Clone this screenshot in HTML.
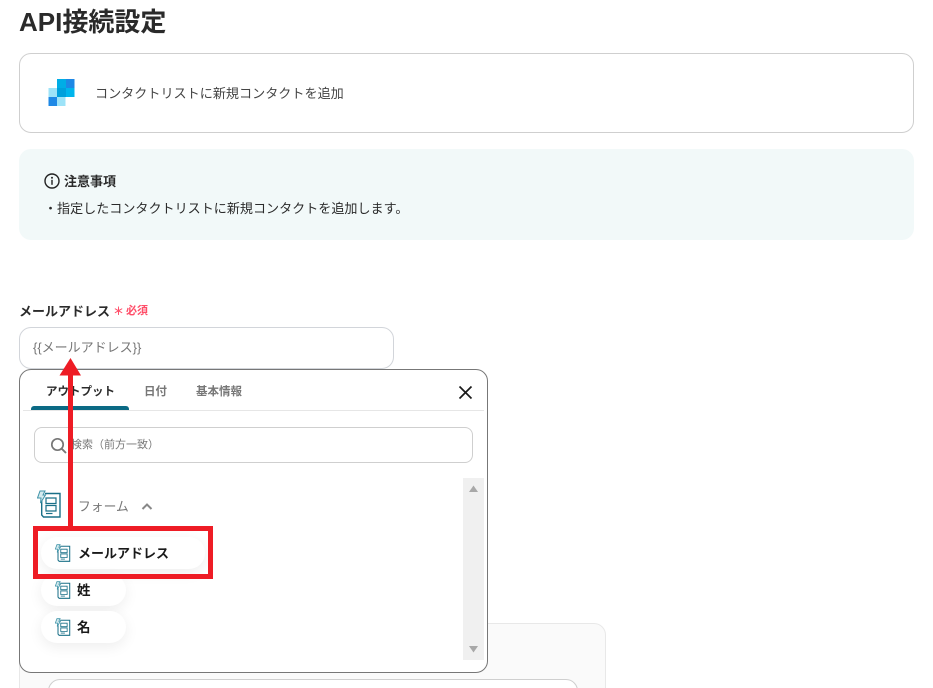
<!DOCTYPE html>
<html lang="ja">
<head>
<meta charset="utf-8">
<style>
html,body{margin:0;padding:0;background:#fff;}
#p{position:relative;width:933px;height:688px;overflow:hidden;background:#fff;font-family:"Liberation Sans","Noto Sans CJK JP",sans-serif;color:#2b2b2b;}
.a{position:absolute;box-sizing:border-box;}
.t{position:absolute;white-space:nowrap;line-height:1;}
.pill{position:absolute;left:41px;height:32px;background:#fff;border-radius:16px;box-shadow:0 4px 14px rgba(0,0,0,.07);}
</style>
</head>
<body>
<div id="p">
  <div class="t" style="left:19px;top:9px;font-size:26px;font-weight:700;color:#2a2a2a;">API接続設定</div>

  <div class="a" style="left:19px;top:53px;width:895px;height:80px;border:1px solid #cfcfcf;border-radius:12px;"></div>
  <svg class="a" style="left:48px;top:79px;" width="27" height="28" viewBox="0 0 27 28">
    <rect x="9" y="0" width="9" height="9" fill="#00ade6"/>
    <rect x="18" y="0" width="8.500" height="9" fill="#1e88e5"/>
    <rect x="0.500" y="9" width="8.500" height="9" fill="#9de3f8"/>
    <rect x="9" y="9" width="9" height="9" fill="#00a0dc"/>
    <rect x="18" y="9" width="8.500" height="9" fill="#00b5ec"/>
    <rect x="0.500" y="18" width="8.500" height="9" fill="#1e88e5"/>
    <rect x="9" y="18" width="8.500" height="9" fill="#9de3f8"/>
  </svg>
  <div class="t" style="left:95px;top:87px;font-size:13.100px;color:#444;">コンタクトリストに新規コンタクトを追加</div>

  <div class="a" style="left:19px;top:149px;width:895px;height:91px;background:#f2f9f9;border-radius:12px;"></div>
  <svg class="a" style="left:44px;top:173px;" width="16" height="16" viewBox="0 0 16 16">
    <circle cx="8" cy="8" r="7" fill="none" stroke="#222" stroke-width="1.400"/>
    <circle cx="8" cy="4.800" r="1" fill="#222"/>
    <rect x="7.300" y="6.800" width="1.400" height="5" fill="#222"/>
  </svg>
  <div class="t" style="left:64px;top:175px;font-size:13px;font-weight:700;color:#2b2b2b;">注意事項</div>
  <div class="t" style="left:44px;top:202px;font-size:13.070px;color:#2b2b2b;">・指定したコンタクトリストに新規コンタクトを追加します。</div>

  <div class="t" style="left:19px;top:305px;font-size:13px;font-weight:700;color:#2b2b2b;">メールアドレス</div>
  <div class="t" style="left:113px;top:307px;font-size:11px;font-weight:700;color:#ff4d68;">＊</div>
  <div class="t" style="left:126px;top:306px;font-size:11px;font-weight:700;color:#ff4d68;">必須</div>

  <div class="a" style="left:19px;top:327px;width:375px;height:42px;border:1px solid #d2d5da;border-radius:12px;"></div>
  <div class="t" style="left:33px;top:341px;font-size:13px;color:#777;">{{メールアドレス}}</div>

  <!-- background panel -->
  <div class="a" style="left:19px;top:623px;width:587px;height:80px;background:#fafafa;border:1px solid #e8e8e8;border-radius:12px;"></div>
  <div class="a" style="left:48px;top:679px;width:530px;height:40px;background:#fff;border:1px solid #cfcfcf;border-radius:12px;"></div>

  <!-- popup -->
  <div class="a" style="left:19px;top:369px;width:469px;height:304px;background:#fff;border:1px solid #777;border-radius:12px;"></div>
  <div class="t" style="left:46px;top:387px;font-size:11.500px;font-weight:700;color:#2b2b2b;">アウトプット</div>
  <div class="t" style="left:144px;top:387px;font-size:11.500px;font-weight:700;color:#777;">日付</div>
  <div class="t" style="left:196px;top:387px;font-size:11.500px;font-weight:700;color:#777;">基本情報</div>
  <div class="a" style="left:23px;top:410px;width:461px;height:1px;background:#e6e6e6;"></div>
  <div class="a" style="left:31px;top:406px;width:98px;height:4px;background:#0b6a85;border-radius:3px 3px 0 0;"></div>
  <svg class="a" style="left:458px;top:385px;" width="15" height="15" viewBox="0 0 15 15">
    <path d="M1.500 1.500L13.500 13.500M13.500 1.500L1.500 13.500" stroke="#1a1a1a" stroke-width="1.700" fill="none"/>
  </svg>

  <div class="a" style="left:34px;top:427px;width:439px;height:36px;border:1px solid #cfcfcf;border-radius:8px;"></div>
  <svg class="a" style="left:50px;top:437px;" width="18" height="18" viewBox="0 0 18 18">
    <circle cx="7.500" cy="7.500" r="5.700" fill="none" stroke="#777" stroke-width="1.700"/>
    <path d="M11.800 11.800L16 16" stroke="#777" stroke-width="1.900" fill="none"/>
  </svg>
  <div class="t" style="left:71px;top:440px;font-size:11px;color:#777;">検索（前方一致）</div>

  <!-- scrollbar -->
  <div class="a" style="left:463px;top:478px;width:21px;height:182px;background:#f0f0f0;"></div>
  <svg class="a" style="left:463px;top:478px;" width="21" height="182" viewBox="0 0 21 182">
    <path d="M10.500 7.500L15 14H6z" fill="#a8a8a8"/>
    <path d="M6 168H15L10.500 174.500z" fill="#a8a8a8"/>
  </svg>

  <!-- form group -->
  <svg class="a" style="left:37px;top:490px;" width="25" height="28" viewBox="0 0 25 28" fill="none">
    <path d="M8 3.500H23V27H6.500L4.700 25V11" stroke="#1a7088" stroke-width="1.400"/>
    <path d="M3 1H8L6 5H8.500L3.500 13L4 8H0.500z" stroke="#3f93a8" stroke-width="1" fill="#d5ebef"/>
    <path d="M9 8H19V13.500H9zM9 15.500H19V21H9z" stroke="#1a7088" stroke-width="1.200"/>
    <path d="M9 23.500H15.500" stroke="#1a7088" stroke-width="1.200"/>
  </svg>
  <div class="t" style="left:78px;top:501px;font-size:12.800px;color:#777;">フォーム</div>
  <svg class="a" style="left:141px;top:502px;" width="12" height="9" viewBox="0 0 12 9">
    <path d="M1.500 7L6 2.500L10.500 7" stroke="#888" stroke-width="2" fill="none"/>
  </svg>

  <div class="pill" style="top:537px;width:164px;"></div>
  <div class="pill" style="top:574px;width:85px;"></div>
  <div class="pill" style="top:611px;width:85px;"></div>

  <svg class="a" style="left:55px;top:544px;" width="16" height="18" viewBox="0 0 25 28" fill="none">
    <path d="M8 3.500H23V27H6.500L4.700 25V11" stroke="#1a7088" stroke-width="1.600"/>
    <path d="M3 1H8L6 5H8.500L3.500 13L4 8H0.500z" stroke="#3f93a8" stroke-width="1.200" fill="#d5ebef"/>
    <path d="M9 8H19V13.500H9zM9 15.500H19V21H9z" stroke="#1a7088" stroke-width="1.300"/>
    <path d="M9 23.500H15.500" stroke="#1a7088" stroke-width="1.300"/>
  </svg>
  <svg class="a" style="left:55px;top:581px;" width="16" height="18" viewBox="0 0 25 28" fill="none">
    <path d="M8 3.500H23V27H6.500L4.700 25V11" stroke="#1a7088" stroke-width="1.600"/>
    <path d="M3 1H8L6 5H8.500L3.500 13L4 8H0.500z" stroke="#3f93a8" stroke-width="1.200" fill="#d5ebef"/>
    <path d="M9 8H19V13.500H9zM9 15.500H19V21H9z" stroke="#1a7088" stroke-width="1.300"/>
    <path d="M9 23.500H15.500" stroke="#1a7088" stroke-width="1.300"/>
  </svg>
  <svg class="a" style="left:55px;top:618px;" width="16" height="18" viewBox="0 0 25 28" fill="none">
    <path d="M8 3.500H23V27H6.500L4.700 25V11" stroke="#1a7088" stroke-width="1.600"/>
    <path d="M3 1H8L6 5H8.500L3.500 13L4 8H0.500z" stroke="#3f93a8" stroke-width="1.200" fill="#d5ebef"/>
    <path d="M9 8H19V13.500H9zM9 15.500H19V21H9z" stroke="#1a7088" stroke-width="1.300"/>
    <path d="M9 23.500H15.500" stroke="#1a7088" stroke-width="1.300"/>
  </svg>

  <div class="t" style="left:78px;top:547px;font-size:13px;font-weight:700;color:#1a1a1a;">メールアドレス</div>
  <div class="t" style="left:77px;top:584px;font-size:13.500px;font-weight:700;color:#1a1a1a;">姓</div>
  <div class="t" style="left:77px;top:621px;font-size:13.500px;font-weight:700;color:#1a1a1a;">名</div>

  <!-- annotations -->
  <div class="a" style="left:33px;top:526px;width:180px;height:53px;border:5px solid #ee1c25;"></div>
  <div class="a" style="left:68px;top:372px;width:5px;height:155px;background:#ee1c25;"></div>
  <svg class="a" style="left:59px;top:357px;" width="23" height="20" viewBox="0 0 23 20">
    <path d="M11.500 1L22 18.500H0.500z" fill="#ee1c25"/>
  </svg>
</div>
</body>
</html>
